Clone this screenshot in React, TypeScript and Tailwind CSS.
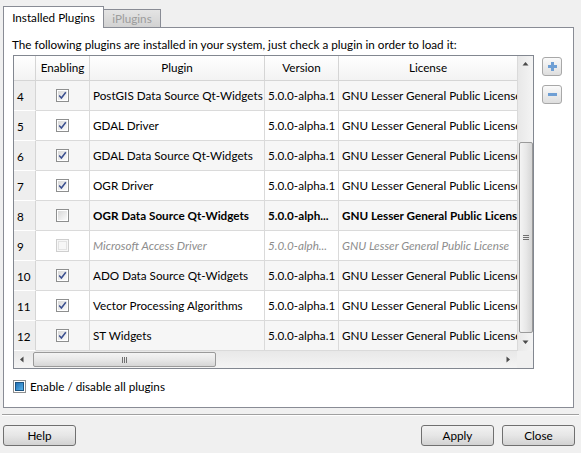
import React from "react";

type Row = { n: number; checked: boolean; name: string; kind?: "bold" | "disabled" };

const rows: Row[] = [
  { n: 4, checked: true, name: "PostGIS Data Source Qt-Widgets" },
  { n: 5, checked: true, name: "GDAL Driver" },
  { n: 6, checked: true, name: "GDAL Data Source Qt-Widgets" },
  { n: 7, checked: true, name: "OGR Driver" },
  { n: 8, checked: false, name: "OGR Data Source Qt-Widgets", kind: "bold" },
  { n: 9, checked: false, name: "Microsoft Access Driver", kind: "disabled" },
  { n: 10, checked: true, name: "ADO Data Source Qt-Widgets" },
  { n: 11, checked: true, name: "Vector Processing Algorithms" },
  { n: 12, checked: true, name: "ST Widgets" },
];

function Check({ checked, disabled }: { checked: boolean; disabled?: boolean }) {
  return (
    <div
      className={
        disabled
          ? "w-[13px] h-[13px] border border-[#cfcfcf] bg-[#f7f7f7] p-px"
          : "w-[13px] h-[13px] border border-[#8e8f8f] bg-white p-px"
      }
    >
      <div
        className={
          disabled
            ? "w-full h-full border border-[#e3e3e3] bg-[#f7f7f7]"
            : "w-full h-full flex items-center justify-center bg-gradient-to-br from-[#d8d8d8] to-[#fbfbfb]"
        }
      >
        {checked && (
          <svg width="9" height="9" viewBox="0 0 9 9">
            <path d="M1.2 4.6 L3.4 7 L7.8 1.2" stroke="#3b4f8f" strokeWidth="1.5" fill="none" />
          </svg>
        )}
      </div>
    </div>
  );
}

function Arrow({ dir }: { dir: "up" | "down" | "left" | "right" }) {
  const d =
    dir === "up"
      ? "M0.5 4.5 L3.5 1 L6.5 4.5 Z"
      : dir === "down"
      ? "M0.5 1.5 L3.5 5 L6.5 1.5 Z"
      : dir === "left"
      ? "M4.5 0.5 L1 3.5 L4.5 6.5 Z"
      : "M1.5 0.5 L5 3.5 L1.5 6.5 Z";
  return (
    <svg width="7" height="7" viewBox="0 0 7 7">
      <path d={d} fill="#4a4a4a" />
    </svg>
  );
}

function Button({ label }: { label: string }) {
  return (
    <div className="w-[73px] h-[21px] rounded-[3px] border border-[#707070] bg-gradient-to-b from-[#f2f2f2] via-[#e6e6e6] to-[#d2d2d2] flex items-center justify-center">
      {label}
    </div>
  );
}

export default function App() {
  return (
    <div className="w-[581px] h-[453px] bg-[#f0f0f0] text-[11.7px] text-black flex flex-col overflow-hidden font-['Lato','Noto_Sans',sans-serif]">
      {/* tabs */}
      <div className="flex h-[21px] mt-[6px] pl-[3px]">
        <div className="relative z-10 h-[22px] w-[101px] border border-b-0 border-[#898c95] bg-white flex items-center justify-center">
          Installed Plugins
        </div>
        <div className="self-end h-[18px] w-[57px] border border-l-0 border-b-0 border-[#898c95] bg-gradient-to-b from-[#e4e4e4] to-[#d2d2d2] text-[#9c9c9c] flex items-center justify-center">
          iPlugins
        </div>
      </div>

      {/* pane */}
      <div className="ml-[3px] w-[571px] h-[381px] border border-[#898c95] bg-white flex flex-col">
        <div className="mt-[8px] pl-[8px] leading-[16px] h-[16px] whitespace-nowrap">
          The following plugins are installed in your system, just check a plugin in order to load it:
        </div>

        <div className="flex mt-[3px] pl-[9px]">
          {/* table */}
          <div className="w-[521px] h-[314px] border border-[#828790] bg-white flex flex-col">
            <div className="flex h-[295px]">
              <div className="w-[503px] flex flex-col">
                {/* header */}
                <div className="flex h-[25px] border-b border-[#d5d5d5] bg-gradient-to-b from-white to-[#f3f3f3]">
                  <div className="w-[22px] border-r border-[#d5d5d5]" />
                  <div className="w-[54px] border-r border-[#d5d5d5] flex items-center justify-center">Enabling</div>
                  <div className="w-[175px] border-r border-[#d5d5d5] flex items-center justify-center">Plugin</div>
                  <div className="w-[74px] border-r border-[#d5d5d5] flex items-center justify-center">Version</div>
                  <div className="w-[178px] flex items-center justify-center">License</div>
                </div>
                {/* rows */}
                {rows.map((r, i) => {
                  const txt =
                    r.kind === "bold"
                      ? "font-bold"
                      : r.kind === "disabled"
                      ? "italic text-[#8d8d8d]"
                      : "";
                  const bg = i % 2 === 0 ? "bg-[#f6f6f6]" : "bg-white";
                  const version = r.kind ? "5.0.0-alph..." : "5.0.0-alpha.1";
                  return (
                    <div key={r.n} className={`flex h-[30px] ${bg}`}>
                      <div className="w-[22px] bg-[#eeeeee] border-r border-b border-r-[#d5d5d5] border-b-white flex items-center pl-[3px] pt-[3px]">
                        {r.n}
                      </div>
                      <div className="w-[54px] border-r border-b border-[#dadada] flex items-center justify-center pr-px">
                        <Check checked={r.checked} disabled={r.kind === "disabled"} />
                      </div>
                      <div className={`w-[175px] border-r border-b border-[#dadada] flex items-center pl-[3px] whitespace-nowrap overflow-hidden ${txt}`}>
                        {r.name}
                      </div>
                      <div className={`w-[74px] border-r border-b border-[#dadada] flex items-center pl-[3px] whitespace-nowrap overflow-hidden ${txt}`}>
                        {version}
                      </div>
                      <div className={`w-[178px] border-b border-[#dadada] flex items-center pl-[3px] whitespace-nowrap overflow-hidden ${txt}`}>
                        GNU Lesser General Public License
                      </div>
                    </div>
                  );
                })}
              </div>
              {/* vertical scrollbar */}
              <div className="w-[16px] border-l border-[#dadada] bg-gradient-to-r from-[#e8e8e8] to-[#f4f4f4] flex flex-col items-center">
                <div className="h-[17px] w-full flex items-center justify-center">
                  <Arrow dir="up" />
                </div>
                <div className="h-[69px]" />
                <div className="h-[191px] w-[14px] rounded-[2px] border border-[#9a9a9a] bg-gradient-to-r from-[#f4f4f4] via-[#e8e8e8] to-[#d6d6d6] flex flex-col items-center justify-center gap-[1px]">
                  <div className="w-[6px] h-px bg-[#707070]" />
                  <div className="w-[6px] h-px bg-[#707070]" />
                  <div className="w-[6px] h-px bg-[#707070]" />
                </div>
                <div className="flex-1" />
                <div className="h-[17px] w-full flex items-center justify-center">
                  <Arrow dir="down" />
                </div>
              </div>
            </div>
            {/* horizontal scrollbar */}
            <div className="flex h-[17px]">
              <div className="w-[503px] bg-gradient-to-b from-[#e8e8e8] to-[#f4f4f4] flex items-center">
                <div className="w-[17px] h-full flex items-center justify-center">
                  <Arrow dir="left" />
                </div>
                <div className="ml-[2px] w-[183px] h-[15px] rounded-[2px] border border-[#9a9a9a] bg-gradient-to-b from-[#f4f4f4] via-[#e8e8e8] to-[#d6d6d6] flex items-center justify-center gap-[1px]">
                  <div className="w-px h-[6px] bg-[#707070]" />
                  <div className="w-px h-[6px] bg-[#707070]" />
                  <div className="w-px h-[6px] bg-[#707070]" />
                </div>
                <div className="flex-1" />
                <div className="w-[17px] h-full flex items-center justify-center">
                  <Arrow dir="right" />
                </div>
              </div>
              <div className="w-[16px] bg-[#f0f0f0]" />
            </div>
          </div>

          {/* add / remove buttons */}
          <div className="ml-[8px] mt-[2px] flex flex-col gap-[9px]">
            <div className="w-[20px] h-[19px] rounded-[3px] border border-[#a8a8a8] bg-gradient-to-b from-[#fafafa] to-[#dedede] flex items-center justify-center">
              <svg width="11" height="11" viewBox="0 0 11 11">
                <path d="M4 1 H7 V4 H10 V7 H7 V10 H4 V7 H1 V4 H4 Z" fill="#6f9fd4" />
              </svg>
            </div>
            <div className="w-[20px] h-[19px] rounded-[3px] border border-[#a8a8a8] bg-gradient-to-b from-[#fafafa] to-[#dedede] flex items-center justify-center">
              <svg width="11" height="11" viewBox="0 0 11 11">
                <path d="M1 4 H10 V7 H1 Z" fill="#6f9fd4" />
              </svg>
            </div>
          </div>
        </div>

        {/* enable/disable all */}
        <div className="flex items-center mt-[9px] pl-[9px] gap-[4px] leading-[16px]">
          <div className="w-[13px] h-[13px] border border-[#8e8f8f] bg-white p-px">
            <div className="w-full h-full border border-[#1c5380] bg-gradient-to-br from-[#1f6fb3] to-[#56b2ea]" />
          </div>
          <span>Enable / disable all plugins</span>
        </div>
      </div>

      {/* separator */}
      <div className="mt-[6px] mx-[2px] h-px bg-[#a0a0a0]" />
      <div className="mx-[2px] h-px bg-white" />

      {/* bottom buttons */}
      <div className="flex mt-[9px] pl-[3px] pr-[6px]">
        <Button label="Help" />
        <div className="flex-1" />
        <Button label="Apply" />
        <div className="w-[8px]" />
        <Button label="Close" />
      </div>
    </div>
  );
}
